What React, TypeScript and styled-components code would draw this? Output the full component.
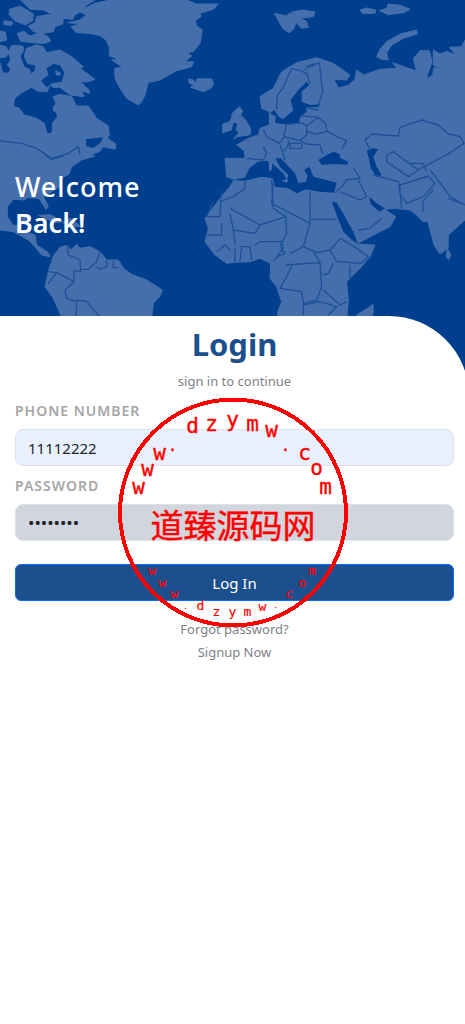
import React from "react";
import styled, { createGlobalStyle } from "styled-components";

const GlobalStyle = createGlobalStyle`
  *, *::before, *::after { box-sizing: border-box; }
  body {
    margin: 0;
    background: #fff;
    font-family: "Noto Sans", "Open Sans", sans-serif;
    color: #212529;
  }
`;

const Page = styled.main`
  position: relative;
  min-height: 100vh;
  overflow: hidden;
  background: #fff;
`;

const Hero = styled.header`
  position: relative;
  height: 396px;
  padding: 169px 15px 0;
  background: #003f8e;
  overflow: hidden;
`;

const Map = styled.svg`
  position: absolute;
  inset: 0;
  width: 100%;
  height: 100%;
`;

const Greeting = styled.h2`
  position: relative;
  margin: 0;
  color: #fff;
  font-size: 27px;
  line-height: 36px;
  font-weight: 600;
`;

const GreetingLead = styled.span`
  display: block;
  font-weight: 500;
  letter-spacing: 1px;
`;

const Sheet = styled.section`
  position: relative;
  margin: -80px -4px 0 0;
  padding: 9px 15px 40px;
  border-top-right-radius: 80px;
  background: #fff;
`;

const Title = styled.h1`
  margin: 0;
  color: #1b4f8e;
  font-size: 31px;
  line-height: 38px;
  font-weight: 700;
  text-align: center;
`;

const Subtitle = styled.p`
  margin: 8px 0 10px;
  color: #7c8288;
  font-size: 13px;
  line-height: 20px;
  text-align: center;
`;

const Form = styled.form`
  display: flex;
  flex-direction: column;
`;

const Field = styled.div`
  display: flex;
  flex-direction: column;
  gap: 8px;
  margin-bottom: 10px;
`;

const Label = styled.label`
  color: #a6a6a6;
  font-size: 14px;
  line-height: 20px;
  font-weight: 600;
  letter-spacing: 1px;
  text-transform: uppercase;
`;

const Input = styled.input<{ $fill: string }>`
  width: 100%;
  height: 37px;
  padding: 6px 12px;
  border: 1px solid #dee2e6;
  border-radius: 8px;
  outline: none;
  background: ${(p) => p.$fill};
  color: #212529;
  font: 15px/20px "Noto Sans", sans-serif;

  &[type="password"] {
    font-size: 17px;
  }
`;

const Submit = styled.button`
  height: 37px;
  margin-top: 13px;
  border: 1px solid #0d6efd;
  border-radius: 6px;
  background: #1b4f8e;
  color: #fff;
  font: 15px/20px "Noto Sans", sans-serif;
  cursor: pointer;
`;

const Links = styled.nav`
  display: flex;
  flex-direction: column;
  align-items: center;
  gap: 3px;
  margin-top: 18px;
`;

const TextLink = styled.a`
  color: #7c8288;
  font-size: 13px;
  line-height: 20px;
  text-decoration: none;
`;

const Seal = styled.svg`
  position: absolute;
  top: 397px;
  left: 50%;
  width: 231px;
  height: 231px;
  transform: translateX(-50%);
  pointer-events: none;
`;

type Glyph = [string, number, number];

const upperRing: Glyph[] = [
  ["w", 138, 494], ["w", 147, 476], ["w", 159, 460], [".", 172, 451],
  ["d", 192, 433], ["z", 211, 431], ["y", 232, 427], ["m", 252, 431],
  ["w", 271, 437], [".", 285, 451], ["c", 304, 460], ["o", 316, 475], ["m", 325, 494],
];

const lowerRing: Glyph[] = [
  ["w", 152, 575], ["w", 162, 587], ["w", 174, 598], [".", 185, 609],
  ["d", 200, 610], ["z", 216, 616], ["y", 232, 616], ["m", 247, 616],
  ["w", 262, 611], [".", 275, 608], ["c", 289, 598], ["o", 302, 587], ["m", 312, 575],
];

function Ring({ glyphs, size }: { glyphs: Glyph[]; size: number }) {
  return (
    <g fontFamily='"DejaVu Sans Mono", monospace' fontSize={size} textAnchor="middle" stroke="#f00" strokeWidth={size > 16 ? 0.4 : 0.2}>
      {glyphs.map(([char, x, y], i) => (
        <text key={i} x={x} y={y} fontSize={char === "." ? size - 6 : size}>{char}</text>
      ))}
    </g>
  );
}

function WorldMap() {
  return (
    <Map viewBox="0 0 1395 1188" preserveAspectRatio="xMinYMin slice" aria-hidden="true">
      <g fill="#446fac" stroke="#446fac" strokeWidth="3" strokeLinejoin="round">
        {/* Greenland, Iceland and the Canadian Arctic */}
        <path d="M203 68L240 60L258 45L240 35L260 22L285 10L330 0H560L590 12L655 12L640 28L600 40L603 50L585 62L590 78L607 90L600 130L580 155L562 158L575 168L555 185L580 185L575 200L530 212L480 240L445 247L435 285L425 305L415 315L380 295L360 265L345 235L344 205L368 202L335 180L358 178L328 168L328 142L318 120L300 107L270 100L230 98L213 80L240 72Z" />
        <path d="M565 237L580 240L588 248L592 236L635 237L641 252L632 265L610 275L585 266L571 262L582 254L568 250Z" />
        <path d="M62 0H285L260 15L247 32L225 45L218 58L190 55L188 72L165 80L160 95L130 100L100 95L85 78L105 68L110 50L155 42L130 30L90 28Z" />
        <path d="M28 28L60 18L100 42L98 62L75 75L45 62L28 45ZM12 62L38 66L35 76L12 74ZM52 100L72 94L90 108L120 98L145 110L152 124L130 131L62 124ZM0 94L16 96L20 120L0 125ZM0 136L18 140L28 160L15 172L0 173Z" />
        {/* North and Central America */}
        <path d="M0 188L8 218L26 220L32 206L22 194L32 180L26 155L35 136L68 138L72 150L60 168L72 200L90 210L92 222L104 214L108 196L82 190L73 168L80 145L108 135L130 140L140 158L180 150L215 170L250 200L240 205L285 238L260 246L240 244L268 270L268 280L245 272L252 290L210 285L180 262L158 262L150 252L142 275L115 275L95 262L62 280L44 295L40 318L58 325L72 345L110 355L133 370L140 398L152 402L158 390L157 368L172 352L170 338L160 332L160 320L168 312L160 290L180 283L215 290L230 318L265 318L290 355L325 378L328 405L322 415L348 432L345 448L310 440L298 455L270 465L285 468L245 480L215 500L207 522L185 535L178 562L155 575L130 590L145 618L138 628L118 596L80 592L75 600L40 598L22 620L22 650L40 677L68 672L82 650L70 645L62 690L105 705L110 735L145 758L150 770L125 765L105 740L85 720L40 695L0 690Z" />
        <path d="M115 646L150 644L190 665L165 668ZM190 670L210 655L225 665L242 680L205 678Z" />
        {/* South America */}
        <path d="M160 768L180 742L202 736L212 750L230 733L240 745L270 740L300 755L320 780L355 780L370 805L395 823L440 840L487 870L480 888L460 910L454 960L430 1040L310 1080L220 1040L180 940L160 895L135 860L145 815Z" />
        {/* Arctic islands */}
        <path d="M823 40L860 48L870 38L895 50L920 65L925 82L905 85L888 68L880 88L868 98L850 88ZM875 36L910 30L945 36L940 50L900 54ZM1080 30L1100 24L1128 30L1125 40L1088 40ZM1138 32L1160 25L1165 12L1200 16L1230 28L1210 38L1165 44ZM1130 170L1140 148L1160 125L1200 102L1250 90L1252 102L1210 115L1175 135L1160 158L1165 180L1145 178Z" />
        {/* British Isles */}
        <path d="M695 342L718 320L728 332L722 346L735 358L752 385L750 404L712 410L700 418L718 396L708 390L714 372L700 365ZM668 398L668 372L688 366L696 350L700 365L694 390Z" />
        {/* Europe, Asia and Africa */}
        <path d="M780 290L820 265L845 215L890 188L950 173L1000 190L1050 225L1040 240L1002 238L1015 264L1045 256L1065 238L1070 210L1090 225L1140 208L1190 205L1178 188L1250 213L1240 176L1260 152L1288 152L1296 185L1278 238L1298 225L1302 203L1320 205L1300 195L1300 150L1320 162L1340 154L1368 165L1348 142L1385 140L1395 120V660L1345 705L1344 745L1320 762L1302 735L1284 665L1268 664L1250 645L1230 630L1180 625L1140 630L1105 600L1130 630L1160 632L1187 650L1170 680L1130 700L1070 732L1125 735L1110 770L1080 805L1040 845L1045 900L1040 960L980 1020L850 1000L832 940L845 905L830 860L810 835L812 790L780 775L750 785L705 787L680 790L645 765L615 725L625 685L615 655L660 595L690 560L702 538L680 530L675 475L735 475L733 452L710 435L745 415L775 405L780 385L808 375L808 335L785 325Z" />
        <path d="M1070 945L1110 920L1119 912L1120 935L1100 1000L1065 1000ZM1342 748L1352 762L1348 778L1338 772Z" />
      </g>
      <g fill="#003f8e">
        <path d="M823 330L836 350L850 358L880 330L872 300L895 270L920 245L928 255L905 275L905 305L930 315L960 313L955 321L918 322L920 335L900 350L898 368L860 374L825 368L828 350L810 340ZM160 192L180 196L193 218L185 245L155 250L140 262L123 242L145 225L140 205ZM258 418L310 412L300 430L280 444L258 438ZM1100 452L1118 445L1134 448L1120 470L1130 500L1145 525L1130 530L1112 505L1108 480Z" />
        <path d="M698 540L735 533L748 505L772 486L800 482L815 490L850 520L860 540L865 525L840 500L826 475L842 475L885 520L895 550L918 545L922 525L912 510L928 500L940 530L990 543L1010 548L1002 578L960 575L918 568L890 580L865 565L825 560L818 535L785 530L735 542ZM955 480L980 465L1000 455L1020 462L1020 474L1045 485L1042 494L1000 492L965 495Z" />
        <path d="M995 605L1010 608L1032 645L1060 695L1074 732L1056 720L1030 695L1010 645ZM1108 590L1130 610L1155 625L1138 635L1112 612Z" />
      </g>
      <g fill="#446fac">
        <path d="M806 483L816 480L816 510L807 512ZM165 210L183 218L180 228L168 225ZM843 540L865 538L860 550Z" />
      </g>
      <g fill="none" stroke="#1d5099" strokeWidth="4" strokeLinejoin="round">
        {/* Americas */}
        <path d="M0 423L65 430L110 445L155 475L205 460L235 440L240 465M135 465L155 478L190 468M202 736L205 765L240 780L242 815L222 812L222 845L195 870L200 895L230 905L228 960M240 808L265 808L290 785L300 755M320 780V800L300 808L290 800M340 782V802L355 803M145 850L170 818L222 845M230 900L260 905L290 940L310 960M145 815L168 818" />
        {/* Europe */}
        <path d="M830 330L832 285L848 265L875 205L900 212L920 220L930 250M910 210L958 188L968 275L955 315M920 200L945 190M860 370L850 415L838 430L800 410L790 390M860 374L905 368L920 378L920 405L900 422L850 410M920 378L955 352L978 372L980 395L950 402L920 395M900 348L940 350L955 352M918 322L955 330M980 392L1010 410L1040 422L1025 448M900 422L920 432L960 435L968 462M865 420V435L850 455M870 430H905V445H870ZM840 435L855 480M740 475L790 480L800 460L790 440" />
        {/* Central and South Asia */}
        <path d="M1110 450L1096 420L1115 402L1195 408L1200 382L1265 360L1315 375L1345 402L1380 410L1392 430L1340 465M1160 485V465L1180 455L1200 470L1255 510L1290 490L1340 465M1160 485L1225 530L1255 510M1230 490H1268L1280 515M1290 510L1310 535L1325 555L1350 590L1395 615M1200 555L1285 528L1305 550L1270 590L1220 610L1200 580V555M1270 635L1268 605L1300 570M1120 525L1195 545L1200 580L1205 625M1075 540L1100 590M1035 540L1080 535L1060 505M1345 595L1370 605L1395 615M1005 578L1030 555L1045 535M1020 575L1080 600L1100 590M1075 690L1110 685L1145 655" />
        {/* Africa */}
        <path d="M660 605L700 590L735 565V545M815 540L820 625L857 650L780 675L690 625M820 550L815 610L930 670V575M930 658H1010M690 640L700 690L765 700L780 675M857 650L860 700L840 740L855 760L830 770M930 670L910 740L870 760M910 740L950 758L990 750L1022 715M857 795L960 788L940 755M1022 715L1070 745L1105 770L1085 790L1010 785L990 750M960 788L965 860L950 900L910 910L905 875L840 865L857 835L877 795M1000 790L985 820L970 825M1050 795V840M970 870L1020 915L1040 905M910 910V945M910 915L960 905L1010 920L985 945M640 605L620 650H660L665 570M620 705H665V670M650 755L675 735L690 750M705 787V745M720 785L725 740H750L755 780M765 735L780 725L845 725L850 745L820 785M700 690L705 735" />
      </g>
    </Map>
  );
}

export default function App() {
  return (
    <>
      <GlobalStyle />
      <Page>
        <Hero>
          <WorldMap />
          <Greeting>
            <GreetingLead>Welcome</GreetingLead>
            Back!
          </Greeting>
        </Hero>
        <Sheet>
          <Title>Login</Title>
          <Subtitle>sign in to continue</Subtitle>
          <Form onSubmit={(e: React.FormEvent) => e.preventDefault()}>
            <Field>
              <Label htmlFor="phone">Phone Number</Label>
              <Input id="phone" type="tel" defaultValue="11112222" $fill="#e8f0fe" />
            </Field>
            <Field>
              <Label htmlFor="password">Password</Label>
              <Input id="password" type="password" defaultValue="abcd1234" $fill="#d1d5dd" />
            </Field>
            <Submit type="submit">Log In</Submit>
          </Form>
          <Links>
            <TextLink href="#forgot">Forgot password?</TextLink>
            <TextLink href="#signup">Signup Now</TextLink>
          </Links>
        </Sheet>
        <Seal viewBox="117 397 231 231" fill="#f00">
          <circle cx="232.5" cy="512.5" r="113" fill="none" stroke="#f00" strokeWidth="4" shapeRendering="crispEdges" />
          <Ring glyphs={upperRing} size={21} />
          <text x="232.5" y="538" textAnchor="middle" fontSize="33" fontFamily='"Noto Sans CJK SC", sans-serif' stroke="#f00" strokeWidth="0.4">道臻源码网</text>
          <Ring glyphs={lowerRing} size={13} />
        </Seal>
      </Page>
    </>
  );
}
